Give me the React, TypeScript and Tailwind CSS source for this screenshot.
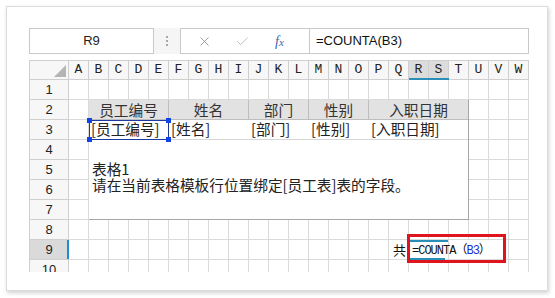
import { X, Check } from "lucide-react";

const COLS = "ABCDEFGHIJKLMNOPQRSTUVW".split("");
const CJK = { fontFamily: '"Noto Sans CJK SC", "Noto Sans", sans-serif' };
const MONO = { fontFamily: '"Liberation Mono", "Noto Sans CJK SC", monospace' };
const SANS = { fontFamily: '"Liberation Sans", "Noto Sans", sans-serif' };

const headers = [
  { label: "员工编号", w: "w-[80px]" },
  { label: "姓名", w: "w-[80px]" },
  { label: "部门", w: "w-[60px]" },
  { label: "性别", w: "w-[60px]" },
  { label: "入职日期", w: "w-[99px]" },
];

const inMerged = (r: number, c: number) => r >= 2 && r <= 7 && c >= 1 && c <= 19;

const TableTemplate = () => (
  <div className="col-start-3 col-end-22 row-start-3 row-end-9 relative flex flex-col border-r border-b border-[#a6a6a6] bg-white text-[#222] text-[14.67px]" style={CJK}>
    <div className="flex h-[20px]">
      {headers.map((h, i) => (
        <div
          key={h.label}
          className={`${h.w} flex items-center justify-center bg-[#e2e2e2] border-b border-[#bdbdbd] text-[#333] ${i < 4 ? "border-r" : ""}`}
        >
          {h.label}
        </div>
      ))}
    </div>
    <div className="flex h-[20px] border-b border-[#d6d6d6]">
      {headers.map((h) => (
        <div key={h.label} className={`${h.w} flex items-center pl-[2px] leading-none whitespace-nowrap`}>
          [{h.label}]
        </div>
      ))}
    </div>
    <div className="flex-1 pl-[3px] pt-[21px] leading-[16px]">
      <p>表格1</p>
      <p>请在当前表格模板行位置绑定[员工表]表的字段。</p>
    </div>

    {/* selection of B3:E3 */}
    <div className="absolute left-0 top-[20px] w-[80px] h-[20px] border border-[#1f3a9e] pointer-events-none">
      <span className="absolute -left-[3px] -top-[3px] w-[5px] h-[5px] bg-[#1144e6]" />
      <span className="absolute -right-[3px] -top-[3px] w-[5px] h-[5px] bg-[#1144e6]" />
      <span className="absolute -left-[3px] -bottom-[3px] w-[5px] h-[5px] bg-[#1144e6]" />
      <span className="absolute -right-[3px] -bottom-[3px] w-[5px] h-[5px] bg-[#1144e6]" />
    </div>
  </div>
);

const Sheet = () => {
  const cells: React.ReactNode[] = [];

  // header row
  cells.push(
    <div key="corner" className="relative border-l border-t border-r border-b border-[#cfcfcf] bg-[#f7f7f7]">
      <div
        className="absolute right-[2px] bottom-[2px] w-[12px] h-[12px] bg-[#b4b4b4]"
        style={{ clipPath: "polygon(100% 0, 100% 100%, 0 100%)" }}
      />
    </div>
  );
  COLS.forEach((c) => {
    const hi = c === "R" || c === "S";
    cells.push(
      <div
        key={"h" + c}
        className={`relative flex items-center justify-center border-t border-r border-b border-[#cfcfcf] text-[13px] text-[#222] ${hi ? "bg-[#dcdcdc]" : "bg-[#f7f7f7]"}`}
        style={MONO}
      >
        {c}
        {hi && <span className="absolute left-0 -right-[1px] -bottom-[1px] h-[2px] bg-[#2a8fb8]" />}
      </div>
    );
  });

  for (let r = 1; r <= 10; r++) {
    const sel = r === 9;
    cells.push(
      <div
        key={"r" + r}
        className={`relative flex items-center justify-center border-l border-r border-b border-[#cfcfcf] text-[13px] text-[#222] ${sel ? "bg-[#dadada]" : "bg-[#f7f7f7]"}`}
        style={SANS}
      >
        {r}
        {sel && <span className="absolute -right-[1px] top-0 bottom-0 w-[2px] bg-[#1d8ed2]" />}
      </div>
    );
    if (r === 2) cells.push(<TableTemplate key="tpl" />);
    for (let c = 0; c < COLS.length; c++) {
      if (inMerged(r, c)) continue;
      const key = COLS[c] + r;
      if (r === 9 && c === 16) {
        cells.push(
          <div key={key} className="flex items-center justify-end pr-[2px] border-r border-b border-[#dadada] text-[13px] text-[#111]" style={CJK}>
            共
          </div>
        );
        continue;
      }
      if (r === 9 && c === 17) {
        cells.push(
          <div key={key} className="col-span-2 relative flex items-center pl-[3px] border-r border-b border-[#dadada] z-10">
            <span className="absolute left-0 right-0 top-0 h-[2px] bg-[#2a8fb8]" />
            <span className="absolute left-0 right-[3px] -bottom-[1px] h-[2px] bg-[#2a8fb8]" />
            <span className="whitespace-nowrap text-[12px] tracking-[-1px] text-[#111]" style={MONO}>
              =COUNTA<span style={CJK} className="tracking-[-1px]">（</span>
              <span className="text-[#1a2fd0]">B3</span>
              <span style={CJK} className="tracking-normal">）</span>
            </span>
          </div>
        );
        c++;
        continue;
      }
      const noRight = r === 9 && (c === 19 || c === 20);
      cells.push(
        <div key={key} className={`border-b border-[#dadada] ${noRight ? "" : "border-r"}`} />
      );
    }
  }

  return (
    <div className="relative mt-[6px] h-[212px] overflow-hidden">
      <div className="grid grid-cols-[40px_repeat(23,20px)] grid-rows-[repeat(11,20px)] bg-white">
        {cells}
      </div>
      {/* red annotation box */}
      <div className="absolute left-[378px] top-[174px] w-[99px] h-[29px] border-[3px] border-[#e0141c] z-20 pointer-events-none" />
    </div>
  );
};

const FormulaBar = () => (
  <div className="flex h-[26px] bg-[#f5f5f5]">
    <div className="w-[125px] flex items-center justify-center bg-white border border-[#c9c9c9] text-[13px] text-[#222]" style={SANS}>
      R9
    </div>
    <div className="w-[26px] flex flex-col items-center justify-center gap-[2px]">
      <span className="w-[2px] h-[2px] bg-[#a8a8a8]" />
      <span className="w-[2px] h-[2px] bg-[#a8a8a8]" />
      <span className="w-[2px] h-[2px] bg-[#a8a8a8]" />
    </div>
    <div className="flex-1 flex bg-white border border-[#c9c9c9]">
      <div className="w-[128px] flex items-center">
        <X className="ml-[16px] w-[15px] h-[15px] text-[#8a8a8a]" strokeWidth={1.3} />
        <Check className="ml-[23px] w-[15px] h-[15px] text-[#b0b0b0]" strokeWidth={1.3} />
        <span className="ml-[25px] text-[14px] italic text-[#3b63ad]" style={{ fontFamily: '"Liberation Serif", serif' }}>
          f<span className="text-[11px]">x</span>
        </span>
      </div>
      <div className="flex-1 flex items-center pl-[6px] border-l border-[#c9c9c9] text-[13px] text-[#111]" style={SANS}>
        =COUNTA(B3)
      </div>
    </div>
  </div>
);

export default function App() {
  return (
    <div className="w-[555px] h-[298px] bg-white pt-[6px] pl-[6px]">
      <div className="w-[542px] h-[285px] border border-[#dcdcdc] bg-white shadow-[1px_2px_4px_rgba(0,0,0,0.18)] pl-[22px] pr-[18px] pt-[21px]">
        <FormulaBar />
        <Sheet />
      </div>
    </div>
  );
}
